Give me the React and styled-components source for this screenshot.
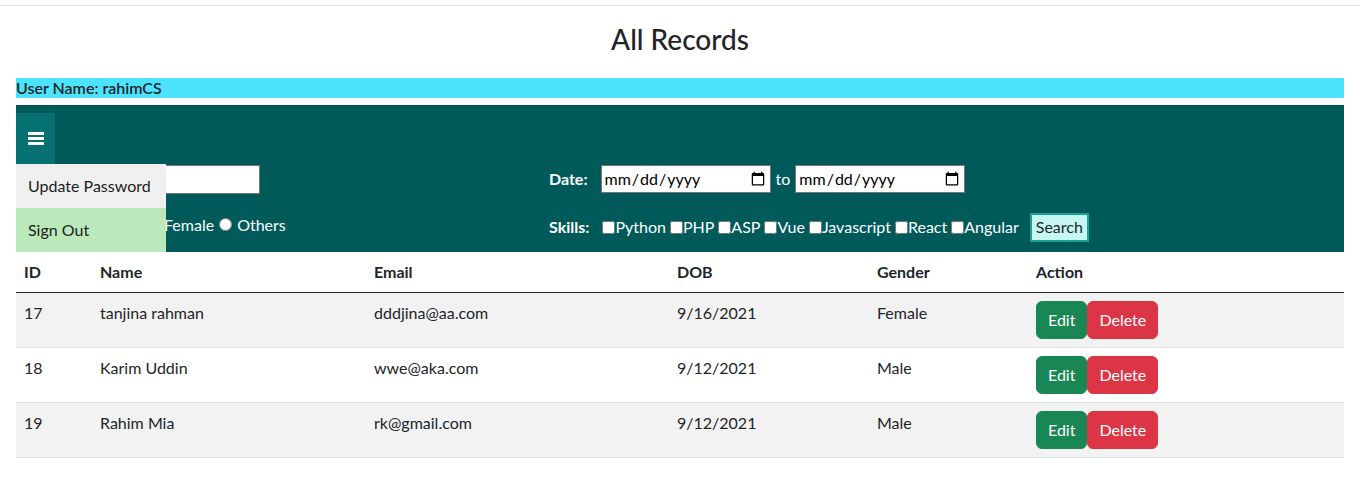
import React from "react"
import styled, { createGlobalStyle } from "styled-components"

const records = [
  { id: 17, name: "tanjina rahman", email: "dddjina@aa.com", dob: "9/16/2021", gender: "Female" },
  { id: 18, name: "Karim Uddin", email: "wwe@aka.com", dob: "9/12/2021", gender: "Male" },
  { id: 19, name: "Rahim Mia", email: "rk@gmail.com", dob: "9/12/2021", gender: "Male" },
]

const skills = ["Python", "PHP", "ASP", "Vue", "Javascript", "React", "Angular"]

const columns = [
  { label: "ID", width: 76 },
  { label: "Name", width: 274 },
  { label: "Email", width: 303 },
  { label: "DOB", width: 200 },
  { label: "Gender", width: 159 },
  { label: "Action" },
]

export default function App() {
  return (
    <>
      <GlobalStyle />
      <TopRule />
      <Title>All Records</Title>
      <Content>
        <UserBar>User Name: rahimCS</UserBar>
        <Panel>
          <MenuButton aria-label="menu">
            <svg width="16" height="13" viewBox="0 0 16 13" fill="#fff">
              <rect x="0" y="0" width="16" height="3" />
              <rect x="0" y="5" width="16" height="3" />
              <rect x="0" y="10" width="16" height="3" />
            </svg>
          </MenuButton>
          <Dropdown>
            <MenuItem $bg="#f0f0f0">Update Password</MenuItem>
            <MenuItem $bg="#bbe9bb">Sign Out</MenuItem>
          </Dropdown>

          {/* the left fields run under the open menu, only their ends show */}
          <FilterForm>
            <LeftRow $pad={70}>
              <TextInput type="text" aria-label="Name" />
            </LeftRow>
            <RightRow>
              <FilterLabel>Date:</FilterLabel>
              <DateInput type="date" />
              <ToText>to</ToText>
              <DateInput type="date" />
            </RightRow>
            <LeftRow $pad={130} $top>
              <Option>
                <Radio type="radio" name="gender" />
                Female
              </Option>
              <Option>
                <Radio type="radio" name="gender" />
                Others
              </Option>
            </LeftRow>
            <RightRow>
              <FilterLabel>Skills:</FilterLabel>
              {skills.map((s) => (
                <Skill key={s}>
                  <Check type="checkbox" />
                  {s}
                </Skill>
              ))}
              <SearchButton type="button">Search</SearchButton>
            </RightRow>
          </FilterForm>
        </Panel>

        <Table>
          <thead>
            <tr>
              {columns.map((c) => (
                <Th key={c.label} $w={c.width}>
                  {c.label}
                </Th>
              ))}
            </tr>
          </thead>
          <tbody>
            {records.map((r) => (
              <Row key={r.id}>
                <Td>{r.id}</Td>
                <Td>{r.name}</Td>
                <Td>{r.email}</Td>
                <Td>{r.dob}</Td>
                <Td>{r.gender}</Td>
                <Td>
                  <Actions>
                    <ActionButton $bg="#198754">Edit</ActionButton>
                    <ActionButton $bg="#dc3545">Delete</ActionButton>
                  </Actions>
                </Td>
              </Row>
            ))}
          </tbody>
        </Table>
      </Content>
    </>
  )
}

const GlobalStyle = createGlobalStyle`
  * {
    box-sizing: border-box;
  }
  body {
    margin: 0;
    background: #fff;
    color: #212529;
    font-family: Lato, "Noto Sans", sans-serif;
    font-size: 16px;
    line-height: 1.5;
  }
  input,
  button {
    font-family: inherit;
    font-size: inherit;
    line-height: inherit;
  }
`

const TopRule = styled.div`
  height: 6px;
  border-bottom: 1px solid #dedede;
`

const Title = styled.h3`
  margin: 17px 0 21px;
  text-align: center;
  font-size: 28px;
  font-weight: 500;
  line-height: 1.2;
`

const Content = styled.div`
  padding: 0 16px;
`

const UserBar = styled.div`
  background: #4be3fe;
  font-weight: 600;
  line-height: 20px;
  margin-bottom: 7px;
`

const Panel = styled.div`
  position: relative;
  background: #005a5a;
  color: #fff;
  padding: 8px 0 10px;
`

const MenuButton = styled.button`
  display: flex;
  align-items: center;
  justify-content: center;
  width: 39px;
  height: 51px;
  padding: 0;
  border: none;
  background: #077070;
  cursor: pointer;
`

// menu opened from the hamburger, sits over the form
const Dropdown = styled.div`
  position: absolute;
  top: 59px;
  left: 0;
  width: 150px;
  z-index: 2;
`

const MenuItem = styled.div`
  padding: 10px 12px;
  line-height: 24px;
  background: ${(p) => p.$bg};
  color: #1b1e21;
  cursor: pointer;
`

const FilterForm = styled.form`
  display: grid;
  grid-template-columns: 533px 1fr;
  grid-template-rows: 29px 29px;
  row-gap: 19px;
  margin-top: 1px;
`

const LeftRow = styled.div`
  display: flex;
  align-items: ${(p) => (p.$top ? "flex-start" : "center")};
  padding-left: ${(p) => p.$pad}px;
`

const TextInput = styled.input`
  width: 174px;
  height: 29px;
  padding: 1px 2px;
  border: 1px solid #767676;
  background: #fff;
`

const Option = styled.label`
  display: inline-flex;
  align-items: center;
  margin-right: 5px;
`

const Radio = styled.input`
  width: 13px;
  height: 13px;
  margin: 0 5px 0 0;
`

const RightRow = styled.div`
  display: flex;
  align-items: center;
  white-space: nowrap;
`

const FilterLabel = styled.label`
  font-weight: 700;
  margin-right: 13px;
`

const DateInput = styled.input`
  width: 170px;
  height: 28px;
  padding: 1px 2px;
  border: 1px solid #767676;
  background: #fff;
  color: #000;
`

const ToText = styled.span`
  margin: 0 5px;
`

const Skill = styled.label`
  display: inline-flex;
  align-items: center;
  margin-right: 4px;
`

const Check = styled.input`
  width: 13px;
  height: 13px;
  margin: 0;
`

const SearchButton = styled.button`
  height: 29px;
  margin-left: 7px;
  padding: 0 4px;
  border: 2px solid #19a394;
  background: #c7f7f3;
  color: #212529;
  cursor: pointer;
`

const Table = styled.table`
  width: 100%;
  border-collapse: collapse;
  table-layout: fixed;
`

const Th = styled.th`
  width: ${(p) => (p.$w ? `${p.$w}px` : "auto")};
  padding: 8px;
  text-align: left;
  font-weight: 700;
  border-bottom: 1px solid #212529;
`

const Row = styled.tr`
  &:nth-child(odd) {
    background: #f2f2f2;
  }
`

const Td = styled.td`
  padding: 8px;
  vertical-align: top;
  border-bottom: 1px solid #dee2e6;
`

const Actions = styled.div`
  display: flex;
`

const ActionButton = styled.button`
  padding: 6px 11px;
  border: 1px solid ${(p) => p.$bg};
  border-radius: 6px;
  background: ${(p) => p.$bg};
  color: #fff;
  cursor: pointer;
`
